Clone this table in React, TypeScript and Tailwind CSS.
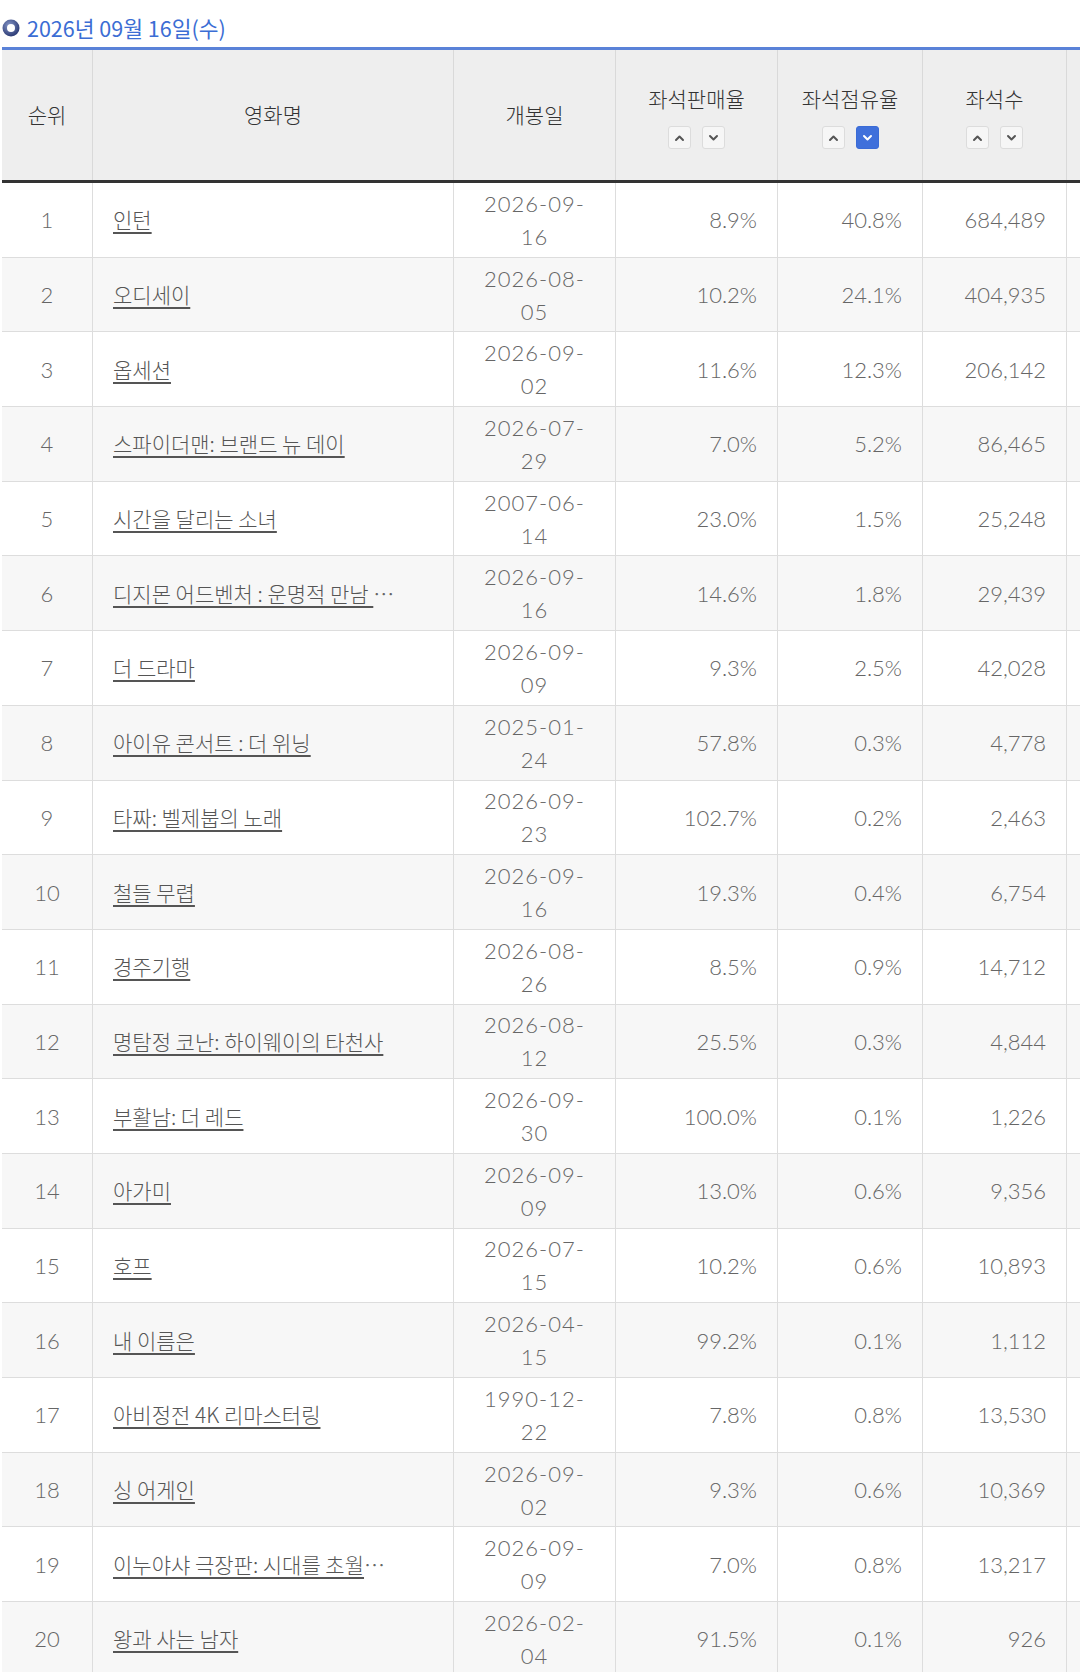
import React from "react";

type Row = {
  rank: number;
  title: string;
  more?: boolean;
  date: string;
  sales: string;
  share: string;
  seats: string;
};

const rows: Row[] = [
  { rank: 1, title: "인턴", date: "2026-09-16", sales: "8.9%", share: "40.8%", seats: "684,489" },
  { rank: 2, title: "오디세이", date: "2026-08-05", sales: "10.2%", share: "24.1%", seats: "404,935" },
  { rank: 3, title: "옵세션", date: "2026-09-02", sales: "11.6%", share: "12.3%", seats: "206,142" },
  { rank: 4, title: "스파이더맨: 브랜드 뉴 데이", date: "2026-07-29", sales: "7.0%", share: "5.2%", seats: "86,465" },
  { rank: 5, title: "시간을 달리는 소녀", date: "2007-06-14", sales: "23.0%", share: "1.5%", seats: "25,248" },
  { rank: 6, title: "디지몬 어드벤처 : 운명적 만남\u00a0", more: true, date: "2026-09-16", sales: "14.6%", share: "1.8%", seats: "29,439" },
  { rank: 7, title: "더 드라마", date: "2026-09-09", sales: "9.3%", share: "2.5%", seats: "42,028" },
  { rank: 8, title: "아이유 콘서트 : 더 위닝", date: "2025-01-24", sales: "57.8%", share: "0.3%", seats: "4,778" },
  { rank: 9, title: "타짜: 벨제붑의 노래", date: "2026-09-23", sales: "102.7%", share: "0.2%", seats: "2,463" },
  { rank: 10, title: "철들 무렵", date: "2026-09-16", sales: "19.3%", share: "0.4%", seats: "6,754" },
  { rank: 11, title: "경주기행", date: "2026-08-26", sales: "8.5%", share: "0.9%", seats: "14,712" },
  { rank: 12, title: "명탐정 코난: 하이웨이의 타천사", date: "2026-08-12", sales: "25.5%", share: "0.3%", seats: "4,844" },
  { rank: 13, title: "부활남: 더 레드", date: "2026-09-30", sales: "100.0%", share: "0.1%", seats: "1,226" },
  { rank: 14, title: "아가미", date: "2026-09-09", sales: "13.0%", share: "0.6%", seats: "9,356" },
  { rank: 15, title: "호프", date: "2026-07-15", sales: "10.2%", share: "0.6%", seats: "10,893" },
  { rank: 16, title: "내 이름은", date: "2026-04-15", sales: "99.2%", share: "0.1%", seats: "1,112" },
  { rank: 17, title: "아비정전 4K 리마스터링", date: "1990-12-22", sales: "7.8%", share: "0.8%", seats: "13,530" },
  { rank: 18, title: "싱 어게인", date: "2026-09-02", sales: "9.3%", share: "0.6%", seats: "10,369" },
  { rank: 19, title: "이누야샤 극장판: 시대를 초월", more: true, date: "2026-09-09", sales: "7.0%", share: "0.8%", seats: "13,217" },
  { rank: 20, title: "왕과 사는 남자", date: "2026-02-04", sales: "91.5%", share: "0.1%", seats: "926" },
];

const cols = "grid grid-cols-[91px_361px_162px_162px_145px_144px_200px]";
// digits in the list use a rounder face than the hangul
const num = { fontFamily: 'Lato, "Noto Sans CJK KR", sans-serif' };

function SortBtn({ up, active }: { up?: boolean; active?: boolean }) {
  return (
    <span
      className={`flex h-[23px] w-[23px] items-center justify-center rounded-[3px] border ${
        active ? "border-[#3a6bd6] bg-[#3f70db]" : "border-[#dcdcdc] bg-[#f6f6f6]"
      }`}
    >
      <svg width="11" height="8" viewBox="0 0 11 8" fill="none">
        <path
          d={up ? "M2 6 L5.5 2.5 L9 6" : "M2 2 L5.5 5.5 L9 2"}
          stroke={active ? "#ffffff" : "#555555"}
          strokeWidth="2"
          strokeLinecap="round"
          strokeLinejoin="round"
        />
      </svg>
    </span>
  );
}

function SortHead({ label, active }: { label: string; active?: boolean }) {
  return (
    <div className="flex flex-col items-center justify-center gap-[12px] border-r border-[#d9d9d9] pt-[2px]">
      <span>{label}</span>
      <div className="flex gap-[11px]">
        <SortBtn up />
        <SortBtn active={active} />
      </div>
    </div>
  );
}

export default function App() {
  return (
    <div
      className="min-h-screen overflow-hidden bg-white text-[#666]"
      style={{ fontFamily: '"Noto Sans CJK KR", "Noto Sans", sans-serif' }}
    >
      <div className="flex h-[47px] items-center gap-[7px] pl-[2px] pt-[9px]">
        <svg width="18" height="18" viewBox="0 0 18 18">
          <defs>
            <radialGradient id="ring" cx="40%" cy="35%" r="70%">
              <stop offset="0%" stopColor="#8596c8" />
              <stop offset="100%" stopColor="#26356f" />
            </radialGradient>
          </defs>
          <circle cx="9" cy="9" r="8.5" fill="url(#ring)" />
          <circle cx="9" cy="9" r="4" fill="#ffffff" />
        </svg>
        <span className="text-[21.5px] leading-none text-[#3b6dd4]">2026년 09월 16일(수)</span>
      </div>

      <div className="ml-[2px] w-[1300px] border-t-[3px] border-[#5a82d8]">
        <div className={`${cols} h-[133px] border-b-[3px] border-[#333] bg-[#eeeeee] text-[21px] font-light text-[#333]`}>
          <div className="flex items-center justify-center border-r border-[#d9d9d9]">순위</div>
          <div className="flex items-center justify-center border-r border-[#d9d9d9]">영화명</div>
          <div className="flex items-center justify-center border-r border-[#d9d9d9]">개봉일</div>
          <SortHead label="좌석판매율" />
          <SortHead label="좌석점유율" active />
          <SortHead label="좌석수" />
          <div />
        </div>

        {rows.map((r, i) => (
          <div
            key={r.rank}
            className={`${cols} h-[74.7px] border-b border-[#dddddd] text-[21px] font-light leading-[33px] ${
              i % 2 === 1 ? "bg-[#f7f7f7]" : "bg-white"
            }`}
          >
            <div className="flex items-center justify-center border-r border-[#dddddd] text-[22px]" style={num}>
              {r.rank}
            </div>
            <div className="flex items-center border-r border-[#dddddd] pl-[20px]">
              <span className="whitespace-nowrap">
                <a href="#" className="text-[#555] underline underline-offset-[4px]">
                  {r.title}
                </a>
                {r.more && "…"}
              </span>
            </div>
            <div
              className="flex items-center justify-center border-r border-[#dddddd] text-center text-[22px] tracking-[1px]"
              style={num}
            >
              <span>
                {r.date.slice(0, 8)}
                <br />
                {r.date.slice(8)}
              </span>
            </div>
            <div className="flex items-center justify-end border-r border-[#dddddd] pr-[20px] text-[22px]" style={num}>
              {r.sales}
            </div>
            <div className="flex items-center justify-end border-r border-[#dddddd] pr-[20px] text-[22px]" style={num}>
              {r.share}
            </div>
            <div className="flex items-center justify-end border-r border-[#dddddd] pr-[20px] text-[22px]" style={num}>
              {r.seats}
            </div>
            <div />
          </div>
        ))}
      </div>
    </div>
  );
}
